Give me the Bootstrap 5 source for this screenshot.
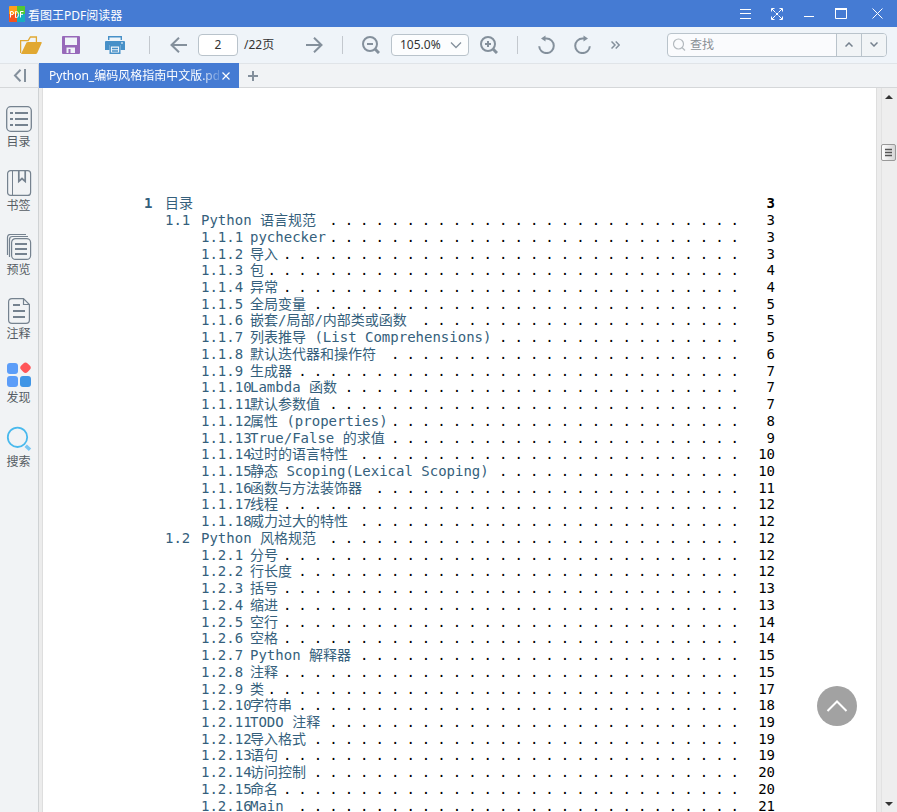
<!DOCTYPE html>
<html lang="zh-CN">
<head>
<meta charset="utf-8">
<meta name="viewport" content="width=device-width, initial-scale=1">
<title>看图王PDF阅读器</title>
<link href="https://cdn.jsdelivr.net/npm/bootstrap@5.3.0/dist/css/bootstrap.min.css" rel="stylesheet">
<style>
:root{--blue:#457bd3;--ink:#84909c;--line:#b9c3cb}
body{font:12px/18px "Noto Sans","Noto Sans CJK SC",sans-serif;color:#333;background:#f1f3f5}
svg{display:block;fill:none;flex:none}
.plain{border:0;background:none;padding:0;color:inherit;display:flex;align-items:center;justify-content:center;flex:none}
.titlebar{height:27px;background:var(--blue);color:#fff;padding-left:9px;gap:3px}
.win{width:32px;height:27px}
.win-close{width:40px}
.tools{height:37px;background:#eff4f9;border-bottom:1px solid #e0e4e8;padding:0 10px 1px 13px}
.tool{width:36px;height:30px;color:var(--ink)}
.tool-more{width:30px}
.rule{width:1px;height:18px;background:#c3c8ce;margin:0 10px;flex:none}
.rule-first{margin-left:16px}
.field{height:22px;border:1px solid var(--line);border-radius:4px;background-color:#fff;color:#333;padding:0;font-size:12px;line-height:18px;flex:none;margin:0 2px}
.page-no{width:40px;text-align:center}
.page-total{width:56px;padding-left:4px}
.zoom{width:78px;padding-left:8px;appearance:none;background:#fcfdfe url("data:image/svg+xml,%3Csvg xmlns='http://www.w3.org/2000/svg' width='12' height='8' fill='none' stroke='%2384909c' stroke-width='1.3'%3E%3Cpath d='M1 1.5l5 5 5-5'/%3E%3C/svg%3E") no-repeat right 6px center}
.find{width:220px;height:24px;border:1px solid var(--line);border-radius:4px;background:#fafbfd;overflow:hidden}
.find input{border:0;background:none;outline:0;padding:0 0 0 4px;font-size:12px;min-width:0}
.find input::placeholder{color:#8b9197;opacity:1}
.find .plain{width:25px;height:24px;border-left:1px solid var(--line);background:#f1f4f6;color:#75818e}
.tabs{height:24px;border-bottom:1px solid #d5d7d9;background:#f1f3f5;color:#84909c}
.collapse-btn{width:39px;height:23px;border-right:1px solid #d5d7d9}
.doc-tab{width:200px;height:25px;margin-top:-1px;padding:0 8px 0 10px;background:var(--blue);color:#fff;z-index:1}
.doc-name{color:#fff;text-decoration:none;overflow:hidden;white-space:nowrap;width:170px;-webkit-mask-image:linear-gradient(90deg,#000 150px,transparent 175px);mask-image:linear-gradient(90deg,#000 150px,transparent 175px)}
.new-tab{width:28px;height:23px}
.side{width:39px;padding:18px 1px 0 0;gap:18px;border-right:1px solid #cfd2d4;color:#75828f}
.side .plain{height:46px}
.side span{color:#555c63;line-height:20px}
.viewer{background:#ececec;min-width:0}
.sheet{margin:0 5px 0 4px;background:#fff;padding:107px 101px 0;outline:1px solid #dedede}
.toc{height:619px;grid-auto-rows:1fr;font:14px/16px "DejaVu Sans Mono","Noto Sans CJK SC",monospace;color:#355f7c}
.toc li{display:flex;min-height:0;align-items:center;white-space:pre}
.toc a{color:inherit;text-decoration:none}
.toc b,.toc i{font-style:normal;flex:none;width:21px}
.lv1{padding-left:21px}
.lv2{padding-left:57px}
.toc .lv1 i{width:36px}
.toc .lv2 i{width:49px}
.dots{flex:1 1 0;min-width:0;display:flex;justify-content:flex-end;color:#000}
.dots span{margin:0 4px 0 3px;flex:none}
.toc em{font-style:normal;color:#000;width:32px;text-align:right;flex:none}
.to-top{right:40px;bottom:86px;width:40px;height:40px;border-radius:50%;background:#a2a2a2;color:#fff}
.scroller{width:16px;background:#eee;box-shadow:inset 1px 0 #e2e2e2;color:#333}
.scroller .plain{width:16px;height:17px}
.thumb{width:15px;height:17px;margin-top:39px;border:1px solid #999;border-radius:2px;background:linear-gradient(90deg,#fff,#d5d5d5);color:#555}
</style>
<script src="https://cdn.jsdelivr.net/npm/bootstrap@5.3.0/dist/js/bootstrap.bundle.min.js"></script>
</head>
<body class="vh-100 d-flex flex-column overflow-hidden">
<header class="titlebar d-flex align-items-center flex-shrink-0">
  <svg width="16" height="16" viewBox="0 0 16 16"><rect width="16" height="16" rx="1" fill="#ff9f1a"/><path d="M8 0h7q1 0 1 1v7H8z" fill="#52c832"/><path d="M8 8h8v7q0 1-1 1H8z" fill="#16aebf"/><path d="M0 8h8v8H1q-1 0-1-1z" fill="#f4511e"/><path d="M1.500 11.500V5.500h1.500q1.500 0 1.500 1.600T3 8.700H1.500M6.500 5.500v6h1q2 0 2-3t-2-3zM11.500 11.500v-6H14.500M11.500 8.300h2.500" stroke="#fff"/></svg>
  <span class="pt-1">看图王PDF阅读器</span>
  <div class="d-flex ms-auto">
    <button class="plain win" aria-label="菜单"><svg width="11" height="10" stroke="#fff"><path d="M0 .5h11M0 4.500h11M0 9.500h11"/></svg></button>
    <button class="plain win" aria-label="全屏"><svg width="12" height="12" stroke="#fff"><path d="M.5 3.500v-3h3M8.500.5h3v3M11.500 8.500v3h-3M3.500 11.500h-3v-3M1 1l3.500 3.500M11 1L7.500 4.500M11 11L7.500 7.500M1 11l3.500-3.500M5 5l2 2M7 5L5 7"/></svg></button>
    <button class="plain win" aria-label="最小化"><svg width="10" height="10" stroke="#fff"><path d="M0 7.500h10"/></svg></button>
    <button class="plain win" aria-label="最大化"><svg width="12" height="11" stroke="#fff"><path d="M.5 1v9.500h11V1"/><path d="M0 1h12" stroke-width="2"/></svg></button>
    <button class="plain win win-close" aria-label="关闭"><svg width="11" height="11" stroke="#fff"><path d="M.5.5l10 10M10.500.5l-10 10"/></svg></button>
  </div>
</header>
<nav class="tools d-flex align-items-center flex-shrink-0" aria-label="工具栏">
  <button class="plain tool" aria-label="打开"><svg width="22" height="18"><path d="M.6 17V4.600h7.600L10.400 1h6v5" stroke="#e1a832" stroke-width="1.300"/><path d="M1 18L6.500 6.500Q7 6 8 6h13q1.200 0 .7 1l-4.500 10q-.5 1-1.500 1z" fill="#e1a832"/></svg></button>
  <button class="plain tool ms-1" aria-label="保存"><svg width="18" height="18"><path fill-rule="evenodd" fill="#9769ba" d="M1 0h16q1 0 1 1v16q0 1-1 1H1q-1 0-1-1V1q0-1 1-1zM3 1.500V9h12V1.500zM4.500 11.500V17h2v-4h2v4h4.500v-5.500z"/></svg></button>
  <button class="plain tool ms-2" aria-label="打印"><svg width="20" height="18"><path d="M3.700 4V.7h12.600V4" stroke="#4790c8" stroke-width="1.400"/><path d="M1 5h18q1 0 1 1v8h-4.500V9h-11v5H0V6q0-1 1-1z" fill="#4790c8"/><path d="M5.200 9.700h9.600v7.600H5.200zM7 12.500h6M7 15h6" stroke="#4790c8" stroke-width="1.400"/><path d="M16 7h2" stroke="#fff"/></svg></button>
  <span class="rule rule-first"></span>
  <button class="plain tool" aria-label="上一页"><svg width="17" height="16" stroke="currentColor" stroke-width="2"><path d="M9 .7L1.500 8 9 15.300M1.500 8H17"/></svg></button>
  <input class="field page-no" value="2" aria-label="页码"><span class="page-total">/22页</span>
  <button class="plain tool" aria-label="下一页"><svg width="17" height="16" stroke="currentColor" stroke-width="2"><path d="M8 .7L15.500 8 8 15.300M15.500 8H0"/></svg></button>
  <span class="rule"></span>
  <button class="plain tool" aria-label="缩小"><svg width="18" height="18" stroke="currentColor" stroke-width="2"><circle cx="8" cy="8" r="7"/><path d="M5 8h6"/><path d="M13 13l4 4" stroke-width="3"/></svg></button>
  <select class="field zoom" aria-label="缩放比例"><option>105.0%</option></select>
  <button class="plain tool" aria-label="放大"><svg width="18" height="18" stroke="currentColor" stroke-width="2"><circle cx="8" cy="8" r="7"/><path d="M5 8h6M8 5v6"/><path d="M13 13l4 4" stroke-width="3"/></svg></button>
  <span class="rule"></span>
  <button class="plain tool" aria-label="向左旋转"><svg width="17" height="19" stroke="currentColor" stroke-width="2"><path d="M1.200 11.200a7.300 7.300 0 1 0 7.300-7.700H6"/><path d="M7.500.5v6L3 3.500z" fill="currentColor" stroke="none"/></svg></button>
  <button class="plain tool" aria-label="向右旋转"><svg width="17" height="19" stroke="currentColor" stroke-width="2"><path d="M15.800 11.200a7.300 7.300 0 1 1-7.300-7.700H11"/><path d="M9.500.5v6L14 3.500z" fill="currentColor" stroke="none"/></svg></button>
  <button class="plain tool tool-more" aria-label="更多"><svg width="9" height="8" stroke="currentColor" stroke-width="1.500"><path d="M.5.5L4 4 .5 7.500M4.700.5L8.200 4 4.700 7.500"/></svg></button>
  <div class="find d-flex align-items-center ms-auto">
    <svg class="ms-1" width="14" height="14" stroke="#b4babf" stroke-width="1.200"><circle cx="6.500" cy="6" r="5"/><path d="M10 9.500l3 3"/></svg>
    <input class="flex-grow-1" type="search" placeholder="查找" aria-label="查找">
    <button class="plain" aria-label="查找上一个"><svg width="8" height="5" stroke="currentColor" stroke-width="1.500"><path d="M.5 4.500L4 1l3.500 3.500"/></svg></button>
    <button class="plain" aria-label="查找下一个"><svg width="8" height="5" stroke="currentColor" stroke-width="1.500"><path d="M.5.5L4 4 7.500.5"/></svg></button>
  </div>
</nav>
<div class="tabs d-flex flex-shrink-0">
  <button class="plain collapse-btn" aria-label="收起侧栏"><svg width="13" height="13" stroke="currentColor" stroke-width="2"><path d="M7.500.8L2 6.500l5.500 5.700M12 0v13"/></svg></button>
  <div class="doc-tab d-flex align-items-center justify-content-between position-relative">
    <a class="doc-name" href="#toc">Python_编码风格指南中文版.pdf</a>
    <button class="plain" aria-label="关闭标签"><svg width="10" height="8" stroke="#fff" stroke-width="1.200"><path d="M1.500.5l7 7M8.500.5l-7 7"/></svg></button>
  </div>
  <button class="plain new-tab" aria-label="新建标签"><svg width="10" height="10" stroke="currentColor" stroke-width="2"><path d="M0 5h10M5 0v10"/></svg></button>
</div>
<div class="d-flex flex-grow-1 overflow-hidden">
  <aside class="side d-flex flex-column flex-shrink-0">
    <button class="plain flex-column"><svg width="26" height="26" stroke="currentColor"><rect x=".7" y=".7" width="24.600" height="24.600" rx="4" stroke-width="1.300"/><path d="M4 7h3M9 7h13M4 13h3M9 13h13M4 19h3M9 19h13" stroke-width="2"/></svg><span>目录</span></button>
    <button class="plain flex-column"><svg width="26" height="26" stroke="currentColor"><rect x="1.600" y=".6" width="23" height="24.800" rx="3" stroke-width="1.200"/><path d="M6.500 1v24"/><path d="M12.800 1v10.300L16 8.500l3.200 2.800V1" stroke-width="1.700"/></svg><span>书签</span></button>
    <button class="plain flex-column"><svg width="26" height="26" stroke="currentColor" stroke-width="1.200"><rect x="5.600" y="4.600" width="19" height="20.800" rx="4"/><path d="M1.500 21V3.500q0-3 3-3H20M3.500 23V5.500q0-3 3-3H22"/><path d="M9 10h12M9 15h12M9 20h12" stroke-width="1.800"/></svg><span>预览</span></button>
    <button class="plain flex-column"><svg width="26" height="26" stroke="currentColor" stroke-width="1.200"><path d="M17.500.6H6q-3.400 0-3.400 3.400v18q0 3.400 3.400 3.400h14q3.400 0 3.400-3.400V6.500zM17.500.6v5.900h5.900"/><path d="M7 7h7M7 13h12M7 19h12" stroke-width="1.800"/></svg><span>注释</span></button>
    <button class="plain flex-column"><svg width="26" height="26"><rect x="1" y="1" width="11" height="11" rx="3" fill="#5c9df8"/><rect x="1" y="14" width="11" height="11" rx="3" fill="#5c9df8"/><rect x="14" y="14" width="11" height="11" rx="3" fill="#3f95e6"/><rect x="15" y="1.200" width="9" height="9" rx="3" transform="rotate(45 19.500 5.700)" fill="#ff5558"/></svg><span>发现</span></button>
    <button class="plain flex-column"><svg width="26" height="26"><circle cx="11.500" cy="11.300" r="9.700" stroke="#49b9ed" stroke-width="1.800"/><path d="M19.700 19.700l4.300 4" stroke="#79c6f2" stroke-width="3.500"/></svg><span>搜索</span></button>
  </aside>
  <main class="viewer d-flex flex-grow-1 position-relative">
    <article class="sheet flex-grow-1">
      <ol class="toc list-unstyled d-grid mb-0" id="toc">
        <li><b>1</b><a href="#">目录</a><span class="flex-grow-1"></span><em class="fw-bold">3</em></li>
        <li class="lv1"><i>1.1</i><a href="#">Python 语言规范</a><span class="dots"></span><em>3</em></li>
        <li class="lv2"><i>1.1.1</i><a href="#">pychecker</a><span class="dots"></span><em>3</em></li>
        <li class="lv2"><i>1.1.2</i><a href="#">导入</a><span class="dots"></span><em>3</em></li>
        <li class="lv2"><i>1.1.3</i><a href="#">包</a><span class="dots"></span><em>4</em></li>
        <li class="lv2"><i>1.1.4</i><a href="#">异常</a><span class="dots"></span><em>4</em></li>
        <li class="lv2"><i>1.1.5</i><a href="#">全局变量</a><span class="dots"></span><em>5</em></li>
        <li class="lv2"><i>1.1.6</i><a href="#">嵌套/局部/内部类或函数</a><span class="dots"></span><em>5</em></li>
        <li class="lv2"><i>1.1.7</i><a href="#">列表推导 (List Comprehensions)</a><span class="dots"></span><em>5</em></li>
        <li class="lv2"><i>1.1.8</i><a href="#">默认迭代器和操作符</a><span class="dots"></span><em>6</em></li>
        <li class="lv2"><i>1.1.9</i><a href="#">生成器</a><span class="dots"></span><em>7</em></li>
        <li class="lv2"><i>1.1.10</i><a href="#">Lambda 函数</a><span class="dots"></span><em>7</em></li>
        <li class="lv2"><i>1.1.11</i><a href="#">默认参数值</a><span class="dots"></span><em>7</em></li>
        <li class="lv2"><i>1.1.12</i><a href="#">属性 (properties)</a><span class="dots"></span><em>8</em></li>
        <li class="lv2"><i>1.1.13</i><a href="#">True/False 的求值</a><span class="dots"></span><em>9</em></li>
        <li class="lv2"><i>1.1.14</i><a href="#">过时的语言特性</a><span class="dots"></span><em>10</em></li>
        <li class="lv2"><i>1.1.15</i><a href="#">静态 Scoping(Lexical Scoping)</a><span class="dots"></span><em>10</em></li>
        <li class="lv2"><i>1.1.16</i><a href="#">函数与方法装饰器</a><span class="dots"></span><em>11</em></li>
        <li class="lv2"><i>1.1.17</i><a href="#">线程</a><span class="dots"></span><em>12</em></li>
        <li class="lv2"><i>1.1.18</i><a href="#">威力过大的特性</a><span class="dots"></span><em>12</em></li>
        <li class="lv1"><i>1.2</i><a href="#">Python 风格规范</a><span class="dots"></span><em>12</em></li>
        <li class="lv2"><i>1.2.1</i><a href="#">分号</a><span class="dots"></span><em>12</em></li>
        <li class="lv2"><i>1.2.2</i><a href="#">行长度</a><span class="dots"></span><em>12</em></li>
        <li class="lv2"><i>1.2.3</i><a href="#">括号</a><span class="dots"></span><em>13</em></li>
        <li class="lv2"><i>1.2.4</i><a href="#">缩进</a><span class="dots"></span><em>13</em></li>
        <li class="lv2"><i>1.2.5</i><a href="#">空行</a><span class="dots"></span><em>14</em></li>
        <li class="lv2"><i>1.2.6</i><a href="#">空格</a><span class="dots"></span><em>14</em></li>
        <li class="lv2"><i>1.2.7</i><a href="#">Python 解释器</a><span class="dots"></span><em>15</em></li>
        <li class="lv2"><i>1.2.8</i><a href="#">注释</a><span class="dots"></span><em>15</em></li>
        <li class="lv2"><i>1.2.9</i><a href="#">类</a><span class="dots"></span><em>17</em></li>
        <li class="lv2"><i>1.2.10</i><a href="#">字符串</a><span class="dots"></span><em>18</em></li>
        <li class="lv2"><i>1.2.11</i><a href="#">TODO 注释</a><span class="dots"></span><em>19</em></li>
        <li class="lv2"><i>1.2.12</i><a href="#">导入格式</a><span class="dots"></span><em>19</em></li>
        <li class="lv2"><i>1.2.13</i><a href="#">语句</a><span class="dots"></span><em>19</em></li>
        <li class="lv2"><i>1.2.14</i><a href="#">访问控制</a><span class="dots"></span><em>20</em></li>
        <li class="lv2"><i>1.2.15</i><a href="#">命名</a><span class="dots"></span><em>20</em></li>
        <li class="lv2"><i>1.2.16</i><a href="#">Main</a><span class="dots"></span><em>21</em></li>
      </ol>
    </article>
    <div class="scroller flex-shrink-0 d-flex flex-column">
      <button class="plain" aria-label="向上滚动"><svg width="8" height="4"><path d="M4 0l4 4H0z" fill="currentColor"/></svg></button>
      <div class="thumb d-flex align-items-center justify-content-center"><svg width="7" height="9" stroke="currentColor"><path d="M0 1.500h7M0 4.500h7M0 7.500h7" stroke-width="1.500"/></svg></div>
      <button class="plain mt-auto" aria-label="向下滚动"><svg width="8" height="4"><path d="M4 4l4-4H0z" fill="currentColor"/></svg></button>
    </div>
    <button class="plain to-top position-absolute" aria-label="回到顶部"><svg width="22" height="12" stroke="#fff" stroke-width="2"><path d="M1.500 11L11 1.500l9.500 9.500"/></svg></button>
  </main>
</div>
<script>
// Fill each leader with as many right-aligned dots as fit beside the title.
function fillLeaders() {
  document.querySelectorAll('.dots').forEach(el => {
    el.innerHTML = '<span>.</span>';
    const pitch = el.firstChild.getBoundingClientRect().width + 7;
    const count = Math.floor(el.getBoundingClientRect().width / pitch);
    el.innerHTML = '<span>.</span>'.repeat(count);
  });
}
fillLeaders();
window.addEventListener('resize', fillLeaders);
</script>
</body>
</html>
